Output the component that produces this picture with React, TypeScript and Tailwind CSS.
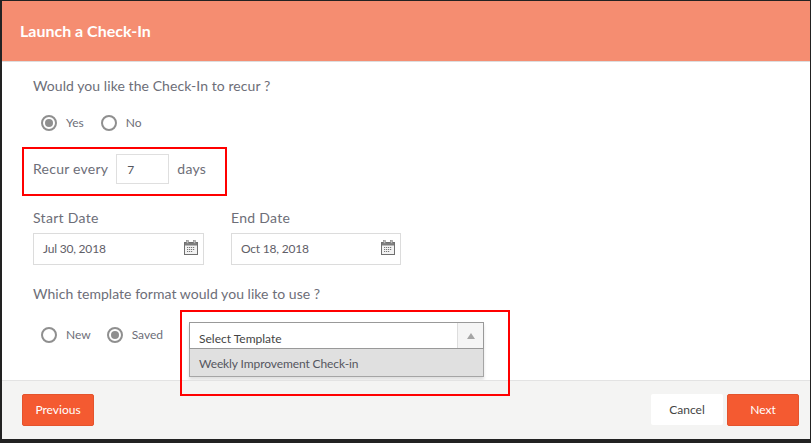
import { useState } from 'react';

const lato = { fontFamily: 'Lato, sans-serif' };

function Radio({ label, checked, className = '' }: { label: string; checked?: boolean; className?: string }) {
  return (
    <div className={`flex items-center ${className}`}>
      <span className="w-[16px] h-[16px] rounded-full border-2 border-[#8f8f8f] flex items-center justify-center shrink-0 bg-white">
        {checked && <span className="w-[8px] h-[8px] rounded-full bg-[#8f8f8f]" />}
      </span>
      <span className="ml-[9px] text-[12px] leading-[16px] text-[#6d6e78]">{label}</span>
    </div>
  );
}

function CalendarIcon() {
  return (
    <svg width="14" height="15" viewBox="0 0 14 15" className="absolute right-[5px] top-[6px]">
      <rect x="0.5" y="2.5" width="13" height="12" fill="#f2f2f2" stroke="#6f6f6f" />
      <rect x="1" y="3" width="12" height="2.5" fill="#7d7d7d" />
      <rect x="2.5" y="0.5" width="2" height="3" fill="#bbb" stroke="#777" strokeWidth="0.5" />
      <rect x="9.5" y="0.5" width="2" height="3" fill="#bbb" stroke="#777" strokeWidth="0.5" />
      <path d="M3 7.5h8M3 9.5h8M3 11.5h6" stroke="#777" strokeWidth="1" strokeDasharray="1.2 0.8" />
    </svg>
  );
}

function DateField({ label, value, width }: { label: string; value: string; width: string }) {
  return (
    <div className={width}>
      <div className="text-[14px] leading-[20px] text-[#6d6e78] tracking-[0.3px]">{label}</div>
      <div className="relative mt-[5px] h-[32px] border border-[#dcdcdc] bg-white pl-[9px] text-[12px] leading-[30px] text-[#5f6068] tracking-[-0.2px]">
        {value}
        <CalendarIcon />
      </div>
    </div>
  );
}

export default function App() {
  const [template] = useState('Select Template');

  return (
    <div className="relative w-[811px] h-[443px] overflow-hidden bg-[#222222] pt-px pl-[2px] pr-px pb-[4px]" style={lato}>
      <div className="flex flex-col h-full bg-white">
        <div className="h-[61px] shrink-0 flex items-center bg-[#f58d71] border-b border-[#dddddd] pl-[18px]">
          <h1 className="text-[16px] font-bold text-white">Launch a Check-In</h1>
        </div>

        <div className="flex-1 pl-[31px] pt-[14px]">
          <p className="text-[14px] leading-[20px] text-[#6d6e78] tracking-[0.07px]">Would you like the Check-In to recur ?</p>
          <div className="flex mt-[19px] pl-[8px]">
            <Radio label="Yes" checked />
            <Radio label="No" className="ml-[17px]" />
          </div>
          <div className="flex items-center mt-[23px] h-[30px] text-[14px] text-[#6d6e78] tracking-[0.25px]">
            <span className="-mt-px">Recur every</span>
            <div className="ml-[8px] w-[53px] h-[30px] border border-[#dfdfdf] pl-[10px] text-[12px] leading-[30px] text-[#55565e]">7</div>
            <span className="ml-[8px] -mt-px">days</span>
          </div>
          <div className="flex gap-[27px] mt-[24px]">
            <DateField label="Start Date" value="Jul 30, 2018" width="w-[171px]" />
            <DateField label="End Date" value="Oct 18, 2018" width="w-[170px]" />
          </div>
          <p className="mt-[19px] text-[14px] leading-[20px] text-[#6d6e78] tracking-[0.04px]">Which template format would you like to use ?</p>
          <div className="flex items-start mt-[18px]">
            <div className="flex pl-[8px] pt-[5px] w-[156px]">
              <Radio label="New" />
              <Radio label="Saved" checked className="ml-[16px]" />
            </div>
            <div className="w-[295px] shadow-[0_3px_3px_rgba(0,0,0,0.12)]">
              <div className="flex h-[27px] border border-[#999999] bg-white">
                <span className="flex-1 pl-[9px] pt-[7px] text-[12px] leading-[18px] text-[#444444]">{template}</span>
                <span className="w-[26px] border-l border-[#dddddd] bg-[#f5f5f5] flex items-center justify-center">
                  <span className="w-0 h-0 border-x-[4px] border-x-transparent border-b-[6px] border-b-[#a5a5a5]" />
                </span>
              </div>
              <div className="h-[28px] border border-t-0 border-[#a5a5a5] bg-[#e0e0e0] pl-[9px] text-[12px] leading-[29px] text-[#55565e] tracking-[-0.1px]">
                Weekly Improvement Check-in
              </div>
            </div>
          </div>
        </div>

        <div className="h-[59px] shrink-0 flex items-center justify-between border-t border-[#e3e3e3] bg-[#f4f4f3] pl-[20px] pr-[11px]">
          <button className="w-[72px] h-[32px] rounded-[2px] border border-[#e4532c] bg-[#f45a31] text-[12px] text-white">Previous</button>
          <div className="flex gap-[4px]">
            <button className="w-[72px] h-[31px] rounded-[2px] bg-white text-[12px] text-[#444444]">Cancel</button>
            <button className="w-[72px] h-[32px] rounded-[2px] border border-[#e4532c] bg-[#f45a31] text-[12px] text-white">Next</button>
          </div>
        </div>
      </div>

      {/* annotation boxes drawn over the form */}
      <div className="absolute left-[22px] top-[147px] w-[205px] h-[49px] border-2 border-[#ff0000]" />
      <div className="absolute left-[180px] top-[310px] w-[330px] h-[86px] border-2 border-[#ff0000]" />
    </div>
  );
}
